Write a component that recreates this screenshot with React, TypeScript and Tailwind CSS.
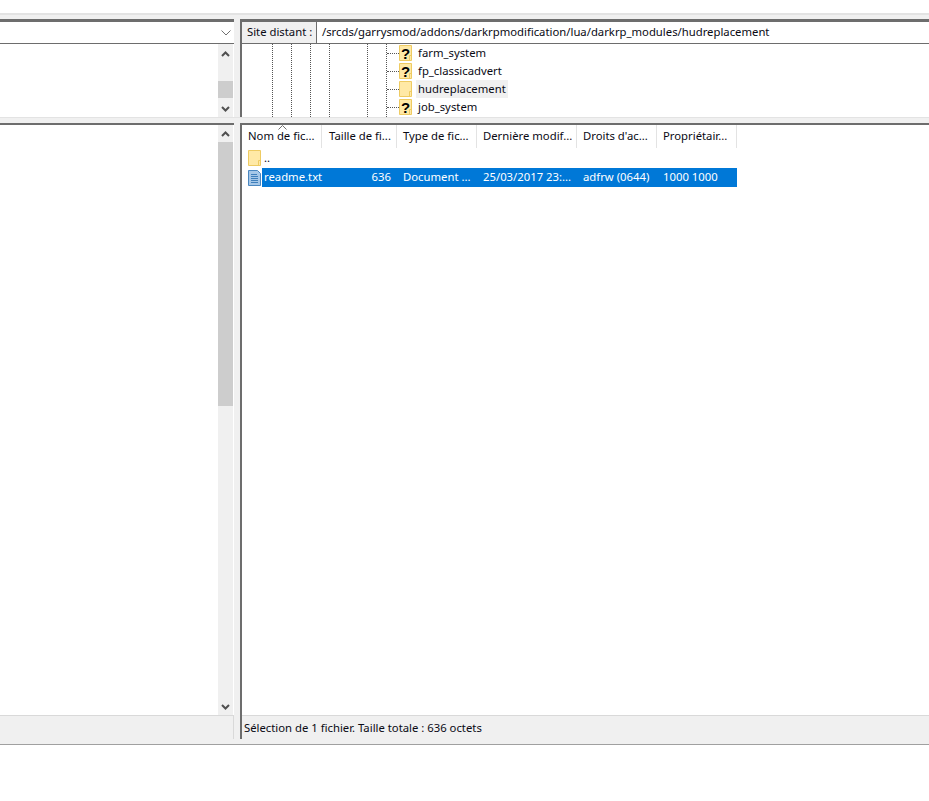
import { ReactNode } from 'react';

const guides = [30, 18, 18, 18, 37, 18];

const treeRows = [
    { name: 'farm_system', unknown: true },
    { name: 'fp_classicadvert', unknown: true },
    { name: 'hudreplacement', unknown: false, active: true },
    { name: 'job_system', unknown: true },
];

const columns = [
    { label: 'Nom de fic...', w: 'w-[80px]', pl: 'pl-[6px]' },
    { label: 'Taille de fi...', w: 'w-[75px]', pl: 'pl-[7px]' },
    { label: 'Type de fic...', w: 'w-[80px]', pl: 'pl-[6px]' },
    { label: 'Dernière modif...', w: 'w-[100px]', pl: 'pl-[6px]' },
    { label: "Droits d'ac...", w: 'w-[80px]', pl: 'pl-[6px]' },
    { label: 'Propriétair...', w: 'w-[80px]', pl: 'pl-[6px]' },
];

function Chevron({ up }: { up?: boolean }) {
    return (
        <svg width="9" height="6" viewBox="0 0 9 6" fill="none" stroke="#505050" strokeWidth="2">
            <path d={up ? 'M1 5L4.5 1.5L8 5' : 'M1 1L4.5 4.5L8 1'} />
        </svg>
    );
}

function Folder({ children }: { children?: ReactNode }) {
    return (
        <div className="relative w-[13px] h-[16px]">
            <svg width="13" height="16" viewBox="0 0 13 16" className="absolute inset-0">
                <path d="M.5.5H12.5V15.5H.5Z" fill="#ffe9a6" stroke="#eecb62" />
                <path d="M10.5 15.5V10.5H12.5" fill="none" stroke="#eecb62" />
            </svg>
            {children}
        </div>
    );
}

function FileIcon() {
    return (
        <svg width="13" height="16" viewBox="0 0 13 16">
            <path d="M.5.5H9.5L12.5 3.5V15.5H.5Z" fill="#a5c7e8" stroke="#4a87c0" />
            <path d="M3 4.5H9M3 6.5H10M3 8.5H10M3 10.5H10M3 12.5H10" stroke="#3f7fbb" />
        </svg>
    );
}

function ScrollBar({ children }: { children: ReactNode }) {
    return <div className="w-[15px] h-full flex flex-col items-center bg-[#f0f0f0]">{children}</div>;
}

export default function App() {
    return (
        <div className="w-[929px] h-[801px] bg-white overflow-hidden flex flex-col text-[11.3px] text-[#0a0a14] font-['Noto_Sans','Open_Sans',sans-serif]">
            <div className="h-[13px] shrink-0" />
            <div className="h-[732px] shrink-0 flex flex-col bg-[#f0f0f0] border-t-2 border-[#e3e3e3] border-b border-b-[#a0a0a0]">
                <div className="h-[4px] shrink-0" />

                {/* address + tree */}
                <div className="h-[99px] shrink-0 flex border-b border-[#e3e3e3]">
                    <div className="w-[234px] flex flex-col border-t-[3px] border-[#6d6d6d] bg-white">
                        <div className="h-[22px] shrink-0 flex items-center justify-end pr-[3px] border-b border-[#6d6d6d]">
                            <svg width="10" height="6" viewBox="0 0 10 6" fill="none" stroke="#707070">
                                <path d="M.5.5L5 5L9.5.5" />
                            </svg>
                        </div>
                        <div className="flex-1 flex justify-end pr-px">
                            <ScrollBar>
                                <div className="h-[19px] flex items-center"><Chevron up /></div>
                                <div className="h-[18px]" />
                                <div className="h-[17px] w-full bg-[#cdcdcd]" />
                                <div className="flex-1 flex items-end pb-[5px]"><Chevron /></div>
                            </ScrollBar>
                        </div>
                    </div>
                    <div className="w-[6px]" />
                    <div className="flex-1 flex flex-col border-t-[3px] border-l-2 border-[#6d6d6d] bg-white">
                        <div className="h-[22px] shrink-0 flex border-b border-[#6d6d6d]">
                            <div className="w-[75px] flex items-center pl-[5px] whitespace-nowrap bg-[#f0f0f0] border-r border-[#6d6d6d]">Site distant :</div>
                            <div className="flex-1 flex items-center pl-[5px]">/srcds/garrysmod/addons/darkrpmodification/lua/darkrp_modules/hudreplacement</div>
                        </div>
                        <div className="flex-1 flex">
                            {guides.map((w, i) => (
                                <div key={i} className="flex" style={{ marginLeft: w }}>
                                    <div className="border-l border-dotted border-[#555]" />
                                </div>
                            ))}
                            <div className="flex flex-col">
                                {treeRows.map(r => (
                                    <div key={r.name} className="h-[18px] flex items-center">
                                        <div className="w-[12px] border-t border-dotted border-[#555]" />
                                        <Folder>
                                            {r.unknown && <span className="absolute inset-0 flex items-center justify-center text-[15px] leading-none font-bold text-black font-['Liberation_Sans',sans-serif]">?</span>}
                                        </Folder>
                                        <span className={`ml-[4px] h-[18px] px-[2px] flex items-center ${r.active ? 'bg-[#f0f0f0]' : ''}`}>{r.name}</span>
                                    </div>
                                ))}
                            </div>
                        </div>
                    </div>
                </div>

                <div className="h-[5px] shrink-0" />

                {/* file lists */}
                <div className="flex-1 flex min-h-0">
                    <div className="w-[234px] flex flex-col border-t-2 border-[#6d6d6d]">
                        <div className="flex-1 flex justify-end pr-px bg-white border-b border-[#d9d9d9]">
                            <ScrollBar>
                                <div className="h-[17px] pt-px flex items-center"><Chevron up /></div>
                                <div className="h-[264px] w-full bg-[#cdcdcd]" />
                                <div className="flex-1 flex items-end pb-[5px]"><Chevron /></div>
                            </ScrollBar>
                        </div>
                        <div className="h-[23px] border-r border-[#d9d9d9]" />
                    </div>
                    <div className="w-[6px]" />
                    <div className="flex-1 flex flex-col border-t-2 border-l-2 border-[#6d6d6d]">
                        <div className="flex-1 bg-white border-b border-[#d9d9d9]">
                            <div className="relative h-[23px] flex">
                                <svg width="9" height="5" viewBox="0 0 9 5" fill="none" stroke="#707070" className="absolute left-[36px] top-0">
                                    <path d="M.5 4.5L4.5.5L8.5 4.5" />
                                </svg>
                                {columns.map(c => (
                                    <div key={c.label} className={`${c.w} ${c.pl} flex items-center border-r border-[#e3e3e3] whitespace-nowrap overflow-hidden`}>{c.label}</div>
                                ))}
                            </div>
                            <div className="h-[20px] flex items-center pl-[6px]">
                                <Folder />
                                <span className="ml-[3px]">..</span>
                            </div>
                            <div className="h-[19px] flex items-center pl-[6px]">
                                <FileIcon />
                                <div className="ml-px w-[475px] h-full flex items-center bg-[#0078d7] text-white">
                                    <span className="w-[60px] pl-[2px] whitespace-nowrap">readme.txt</span>
                                    <span className="w-[75px] pr-[6px] text-right">636</span>
                                    <span className="w-[80px] pl-[6px] whitespace-nowrap">Document ...</span>
                                    <span className="w-[100px] pl-[6px] whitespace-nowrap">25/03/2017 23:...</span>
                                    <span className="w-[80px] pl-[6px] whitespace-nowrap">adfrw (0644)</span>
                                    <span className="w-[80px] pl-[6px] whitespace-nowrap">1000 1000</span>
                                </div>
                            </div>
                        </div>
                        <div className="h-[23px] flex items-center pl-[2px] pt-px">Sélection de 1 fichier. Taille totale : 636 octets</div>
                    </div>
                </div>
                <div className="h-[5px] shrink-0" />
            </div>
        </div>
    );
}
